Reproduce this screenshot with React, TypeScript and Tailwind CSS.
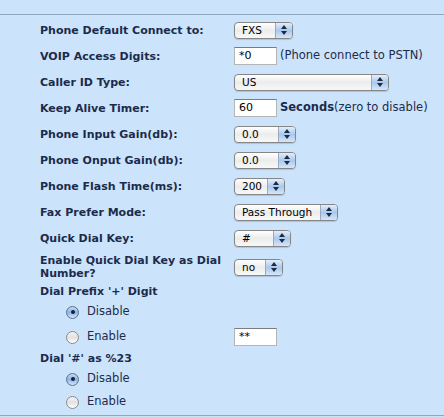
import React from "react"

const label = "font-['DejaVu_Sans',Verdana,sans-serif] font-bold text-[11px] text-[#1c2b4c]"
const plain = "font-['DejaVu_Sans',Verdana,sans-serif] text-[11.5px] text-[#1c2b4c]"

function Select({ value, width }: { value: string; width: string }) {
  return (
    <div
      className={`flex h-[17px] ${width} items-stretch overflow-hidden rounded-[4px] border border-[#868686] bg-gradient-to-b from-white via-[#ececec] to-[#f8f8f8] shadow-[0_1px_1px_rgba(0,0,0,0.15)]`}
    >
      <div className="flex flex-1 items-center pl-[7px] font-['DejaVu_Sans',sans-serif] text-[10.5px] leading-none text-black">
        {value}
      </div>
      <div className="flex w-[17px] flex-col items-center justify-center gap-[2px] border-l border-[#9aa9bd] bg-gradient-to-b from-[#e4eefb] via-[#a9c8ee] to-[#d6e6fa]">
        <svg width="6" height="4" viewBox="0 0 6 4">
          <path d="M3 0 L6 4 L0 4 Z" fill="#1d2a3f" />
        </svg>
        <svg width="6" height="4" viewBox="0 0 6 4">
          <path d="M0 0 L6 0 L3 4 Z" fill="#1d2a3f" />
        </svg>
      </div>
    </div>
  )
}

function TextInput({ value }: { value: string }) {
  return (
    <div className="flex h-[18px] w-[43px] items-center border border-[#b5b5b5] border-t-[#7c7c7c] bg-white pl-[4px] font-['DejaVu_Sans',sans-serif] text-[11px] text-black">
      {value}
    </div>
  )
}

function Radio({ checked, text }: { checked?: boolean; text: string }) {
  return (
    <div className="flex w-[234px] items-center pl-[66px]">
      {checked ? (
        <div className="flex h-[13px] w-[13px] items-center justify-center rounded-full border border-[#5d6f8c] bg-gradient-to-b from-[#c4d8f2] via-[#8fb4e6] to-[#d5e6fb]">
          <div className="h-[4px] w-[4px] rounded-full bg-[#12203a]" />
        </div>
      ) : (
        <div className="h-[13px] w-[13px] rounded-full border border-[#8a8a8a] bg-gradient-to-b from-[#f4f4f4] via-[#e2e2e2] to-white" />
      )}
      <span className={`${plain} ml-[8px]`}>{text}</span>
    </div>
  )
}

function Row({ name, children, h = "h-[26px]" }: { name: React.ReactNode; children?: React.ReactNode; h?: string }) {
  return (
    <div className={`flex ${h} items-center`}>
      <div className={`${label} w-[194px] pl-[40px] box-content leading-[13px]`}>{name}</div>
      <div className="flex items-center">{children}</div>
    </div>
  )
}

export default function App() {
  return (
    <div className="h-[417px] w-[444px] overflow-hidden bg-[#cce4fb]">
      <div className="mt-[14px] border-t border-[#8fa7bf] pt-[2px]">
        <Row name="Phone Default Connect to:">
          <Select value="FXS" width="w-[59px]" />
        </Row>
        <Row name="VOIP Access Digits:">
          <TextInput value="*0" />
          <span className={`${plain} ml-[3px]`}>(Phone connect to PSTN)</span>
        </Row>
        <Row name="Caller ID Type:">
          <Select value="US" width="w-[155px]" />
        </Row>
        <Row name="Keep Alive Timer:">
          <TextInput value="60" />
          <span className={`${plain} ml-[3px]`}>
            <b>Seconds</b>(zero to disable)
          </span>
        </Row>
        <Row name="Phone Input Gain(db):">
          <Select value="0.0" width="w-[62px]" />
        </Row>
        <Row name="Phone Onput Gain(db):">
          <Select value="0.0" width="w-[62px]" />
        </Row>
        <Row name="Phone Flash Time(ms):">
          <Select value="200" width="w-[51px]" />
        </Row>
        <Row name="Fax Prefer Mode:">
          <Select value="Pass Through" width="w-[104px]" />
        </Row>
        <Row name="Quick Dial Key:">
          <Select value="#" width="w-[57px]" />
        </Row>
        <Row name={<>Enable Quick Dial Key as Dial<br />Number?</>} h="h-[32px]">
          <Select value="no" width="w-[49px]" />
        </Row>
        <div className={`${label} flex h-[18px] items-center pl-[40px]`}>Dial Prefix '+' Digit</div>
        <div className="flex h-[22px] items-center">
          <Radio checked text="Disable" />
        </div>
        <div className="flex h-[28px] items-center">
          <Radio text="Enable" />
          <TextInput value="**" />
        </div>
        <div className={`${label} flex h-[16px] items-center pl-[40px]`}>Dial '#' as %23</div>
        <div className="flex h-[24px] items-center">
          <Radio checked text="Disable" />
        </div>
        <div className="flex h-[22px] items-center">
          <Radio text="Enable" />
        </div>
      </div>
      <div className="mt-[2px] border-t border-[#8fa7bf]" />
    </div>
  )
}
